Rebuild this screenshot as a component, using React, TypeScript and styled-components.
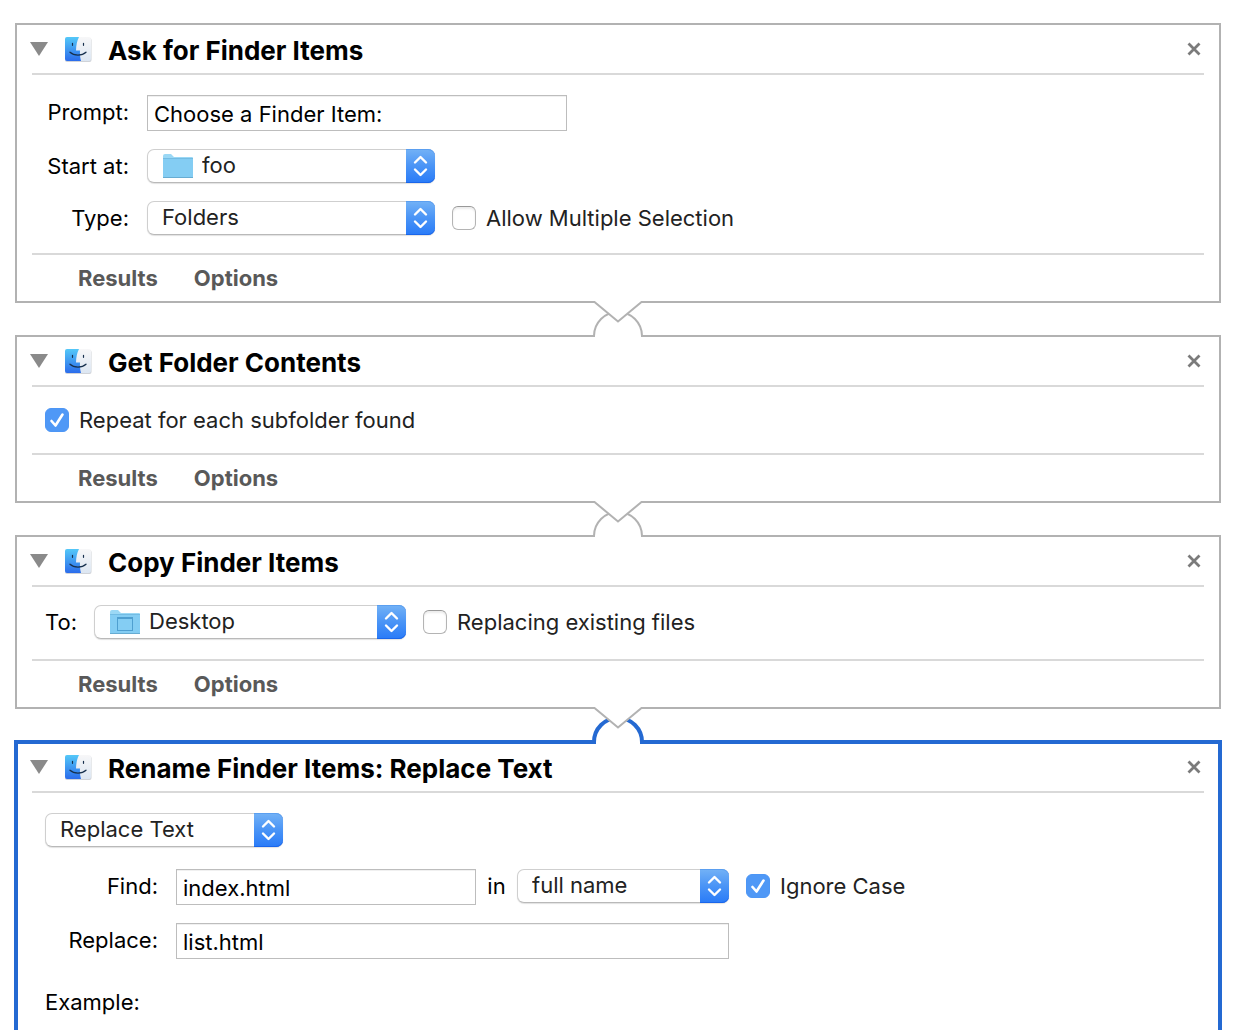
import React, { useId } from "react";
import styled, { createGlobalStyle, css } from "styled-components";

const GlobalStyle = createGlobalStyle`
  *, *::before, *::after { box-sizing: border-box; }
  body {
    margin: 0;
    background: #fff;
    color: #000;
    font-family: Inter, "Liberation Sans", sans-serif;
    font-size: 22px;
    line-height: 34px;
  }
  input, select, button { font: inherit; color: inherit; }
`;

const Workflow = styled.main`
  display: flex;
  flex-direction: column;
  height: 100vh;
  overflow: hidden;
  padding: 23px 15px 0;
`;

const Card = styled.section<{ $selected?: boolean }>`
  flex: none;
  border: 2px solid #b2b2b2;
  background: #fff;
  ${(p) =>
    p.$selected &&
    css`
      border-color: #2469d2;
      box-shadow: 0 0 0 1px #2469d2, inset 0 0 0 1px #2469d2;
    `}
`;

const Header = styled.header`
  display: flex;
  align-items: center;
  height: 50px;
  margin: 0 15px;
  border-bottom: 2px solid #d9d9d9;
`;

const IconButton = styled.button`
  display: flex;
  align-items: center;
  justify-content: center;
  padding: 0;
  border: 0;
  background: none;
  cursor: pointer;
`;

const Disclosure = styled(IconButton)`
  width: 18px;
  height: 18px;
  margin: 0 16px 0 -2px;
`;

const Title = styled.h2`
  flex: 1;
  margin: 0 0 0 16px;
  padding-top: 4px;
  font-size: 26px;
  font-weight: 700;
  line-height: 34px;
`;

const Close = styled(IconButton)`
  width: 20px;
  height: 20px;
`;

const Body = styled.div<{ $top: number; $bottom: number }>`
  display: flex;
  flex-direction: column;
  gap: 18px;
  padding: ${(p) => p.$top}px 28px ${(p) => p.$bottom}px;
`;

const Row = styled.div<{ $before?: number }>`
  display: flex;
  align-items: flex-start;
  gap: 17px;
  margin-top: ${(p) => p.$before ?? 0}px;
`;

const FieldLabel = styled.label<{ $width: number }>`
  flex: none;
  width: ${(p) => p.$width}px;
  padding-right: 1px;
  text-align: right;
  white-space: nowrap;
`;

const InlineGroup = styled.div`
  display: flex;
  align-items: flex-start;
`;

const Joiner = styled.label`
  width: 41px;
  text-align: center;
`;

const TextField = styled.input<{ $width: number }>`
  width: ${(p) => p.$width}px;
  height: 36px;
  padding: 1px 6px 0;
  border: 1px solid #bdbdbd;
  border-radius: 0;
  background: #fff;
  box-shadow: inset 0 1px 0 #f0f0f0;
  outline: none;
`;

const SelectBox = styled.div<{ $width: number }>`
  display: grid;
  flex: none;
  align-items: center;
  width: ${(p) => p.$width}px;
  height: 34px;
  & > * { grid-area: 1 / 1; }
  & > svg { margin-left: 15px; pointer-events: none; }
`;

const NativeSelect = styled.select<{ $icon: boolean }>`
  appearance: none;
  width: 100%;
  height: 34px;
  padding: 0 36px 2px ${(p) => (p.$icon ? 54 : 14)}px;
  border: 1px solid #cfcfcf;
  border-bottom-color: #b9b9b9;
  border-radius: 7px;
  background: #fff;
  color: #222;
  line-height: 30px;
  box-shadow: 0 1px 1px #e2e2e2;
  outline: none;
`;

const Cap = styled.span`
  display: flex;
  align-items: center;
  justify-content: center;
  justify-self: end;
  width: 29px;
  height: 34px;
  border-radius: 0 7px 7px 0;
  background: linear-gradient(#73b2f6, #4a94f6 50%, #297bf8);
  box-shadow: inset 0 -1px 0 #1a66ea, inset 0 1px 0 #5b9ff0;
  pointer-events: none;
`;

const CheckLabel = styled.label`
  display: flex;
  align-items: center;
  gap: 10px;
  height: 34px;
  color: #222;
  white-space: nowrap;
`;

const CheckBox = styled.span`
  display: grid;
  place-items: center;
  width: 24px;
  height: 24px;
  & > * { grid-area: 1 / 1; }
  svg { visibility: hidden; pointer-events: none; }
  input:checked + svg { visibility: visible; }
`;

const NativeCheck = styled.input`
  appearance: none;
  width: 24px;
  height: 24px;
  margin: 0;
  border: 1px solid #b4b4b4;
  border-top-color: #999;
  border-radius: 6px;
  background: #fff;
  box-shadow: inset 0 2px 2px #ededed;
  &:checked {
    border-color: #4d96f5;
    background: #4f98f6;
    box-shadow: none;
  }
`;

const Footer = styled.footer`
  display: flex;
  align-items: center;
  gap: 36px;
  height: 48px;
  margin: 0 15px;
  padding-left: 46px;
  border-top: 2px solid #d9d9d9;
`;

const FooterButton = styled.button`
  padding: 0;
  border: 0;
  background: none;
  color: #595959;
  font-weight: 700;
  cursor: pointer;
`;

const Joint = styled.svg`
  position: relative;
  z-index: 1;
  flex: none;
  align-self: center;
  width: 56px;
  height: 40px;
  margin: -2px 0 -6px;
`;

function Connector({ selected }: { selected?: boolean }) {
  return (
    <Joint viewBox="0 0 56 40" aria-hidden="true">
      <path d="M4 40V35A24 24 0 0 1 52 35V40Z" fill="#fff" />
      <path
        d="M0 35H4A24 24 0 0 1 52 35H56"
        fill="none"
        stroke={selected ? "#2469d2" : "#b2b2b2"}
        strokeWidth={selected ? 4 : 2}
      />
      <path d="M4 0V1L28 21L52 1V0Z" fill="#fff" />
      <path d="M0 1H4.5L28 20.500L51.5 1H56" fill="none" stroke="#b2b2b2" strokeWidth="2" />
    </Joint>
  );
}

function FinderIcon() {
  const id = useId();
  return (
    <svg width="28" height="28" viewBox="0 0 28 28" aria-hidden="true">
      <defs>
        <linearGradient id={id + "b"} x1="0" y1="0" x2="0" y2="1">
          <stop offset="0" stopColor="#54c8f8" />
          <stop offset="1" stopColor="#2b6ceb" />
        </linearGradient>
        <linearGradient id={id + "w"} x1="0" y1="0" x2="0" y2="1">
          <stop offset="0" stopColor="#f7f7f8" />
          <stop offset="1" stopColor="#dce6f2" />
        </linearGradient>
      </defs>
      <rect x="1" y="3" width="26.500" height="24" rx="2" fill="#d0d3d8" />
      <rect x="1" y="2" width="26" height="24" rx="2" fill={`url(#${id}w)`} />
      <path d="M3 2H15C13 6 12.200 10 12 15.500H16C15.800 19 16 22 17 26H3A2 2 0 0 1 1 24V4A2 2 0 0 1 3 2Z" fill={`url(#${id}b)`} />
      <path d="M8.500 8.300V10.300M19.500 8.300V10.300" stroke="#17304d" strokeWidth="1.200" strokeLinecap="round" />
      <path d="M6 17.300C10 21 18 21 22 17.300" fill="none" stroke="#17304d" strokeWidth="1.300" strokeLinecap="round" />
    </svg>
  );
}

function FolderIcon({ desktop }: { desktop?: boolean }) {
  return (
    <svg width="32" height="26" viewBox="0 0 32 26" aria-hidden="true">
      <path d="M1 3Q1 1 3 1H9L12 4H30Q31 4 31 5V24H1Z" fill="#9bd8f5" />
      <path d="M1 6H31V24Q31 25 30 25H2Q1 25 1 24Z" fill="#84cdf3" />
      <path d="M1 5.500H31" stroke="#73bce3" strokeWidth="1" />
      <path d="M1 24.500H31" stroke="#67acd2" strokeWidth="1" />
      {desktop && (
        <g fill="none" stroke="#4f9fd0">
          <rect x="8.500" y="8.500" width="15" height="13" fill="#84cdf3" />
          <path d="M8 9H24" strokeWidth="2" />
        </g>
      )}
    </svg>
  );
}

type PopUpProps = { id: string; width: number; value: string; icon?: React.ReactNode; label?: string };

function PopUp({ id, width, value, icon, label }: PopUpProps) {
  return (
    <SelectBox $width={width}>
      <NativeSelect id={id} $icon={!!icon} defaultValue={value} aria-label={label}>
        <option>{value}</option>
      </NativeSelect>
      {icon}
      <Cap>
        <svg width="15" height="22" viewBox="0 0 15 22" aria-hidden="true">
          <path d="M2 7.500L7.500 2L13 7.500M2 14.500L7.500 20L13 14.500" fill="none" stroke="#fff" strokeWidth="2.400" strokeLinecap="round" strokeLinejoin="round" />
        </svg>
      </Cap>
    </SelectBox>
  );
}

function Check({ text, checked }: { text: string; checked?: boolean }) {
  return (
    <CheckLabel>
      <CheckBox>
        <NativeCheck type="checkbox" defaultChecked={checked} />
        <svg width="24" height="24" viewBox="0 0 24 24" aria-hidden="true">
          <path d="M6.500 13L10.500 17.500L17.500 6.500" fill="none" stroke="#fff" strokeWidth="2.600" strokeLinecap="round" strokeLinejoin="round" />
        </svg>
      </CheckBox>
      {text}
    </CheckLabel>
  );
}

function CardHeader({ title }: { title: string }) {
  return (
    <Header>
      <Disclosure type="button" aria-label="Collapse">
        <svg width="18" height="14" viewBox="0 0 18 14" aria-hidden="true">
          <path d="M0 0H18L9 14Z" fill="#8a8a8a" />
        </svg>
      </Disclosure>
      <FinderIcon />
      <Title>{title}</Title>
      <Close type="button" aria-label="Remove">
        <svg width="14" height="14" viewBox="0 0 14 14" aria-hidden="true">
          <path d="M1.500 1.500L12.500 12.500M12.500 1.500L1.500 12.500" stroke="#7b7b7b" strokeWidth="2.800" />
        </svg>
      </Close>
    </Header>
  );
}

function CardFooter() {
  return (
    <Footer>
      <FooterButton type="button">Results</FooterButton>
      <FooterButton type="button">Options</FooterButton>
    </Footer>
  );
}

export default function App() {
  return (
    <>
      <GlobalStyle />
      <Workflow>
        <Card>
          <CardHeader title="Ask for Finder Items" />
          <Body $top={20} $bottom={18}>
            <Row>
              <FieldLabel $width={85} htmlFor="prompt">Prompt:</FieldLabel>
              <TextField $width={420} id="prompt" defaultValue="Choose a Finder Item:" />
            </Row>
            <Row>
              <FieldLabel $width={85} htmlFor="start">Start at:</FieldLabel>
              <PopUp id="start" width={288} value="foo" icon={<FolderIcon />} />
            </Row>
            <Row>
              <FieldLabel $width={85} htmlFor="type">Type:</FieldLabel>
              <PopUp id="type" width={288} value="Folders" />
              <Check text="Allow Multiple Selection" />
            </Row>
          </Body>
          <CardFooter />
        </Card>
        <Connector />
        <Card>
          <CardHeader title="Get Folder Contents" />
          <Body $top={16} $bottom={16}>
            <Check text="Repeat for each subfolder found" checked />
          </Body>
          <CardFooter />
        </Card>
        <Connector />
        <Card>
          <CardHeader title="Copy Finder Items" />
          <Body $top={18} $bottom={20}>
            <Row>
              <FieldLabel $width={32} htmlFor="to">To:</FieldLabel>
              <PopUp id="to" width={312} value="Desktop" icon={<FolderIcon desktop />} />
              <Check text="Replacing existing files" />
            </Row>
          </Body>
          <CardFooter />
        </Card>
        <Connector selected />
        <Card $selected>
          <CardHeader title="Rename Finder Items: Replace Text" />
          <Body $top={20} $bottom={40}>
            <PopUp id="mode" width={238} value="Replace Text" label="Rename mode" />
            <Row $before={4}>
              <FieldLabel $width={114} htmlFor="find">Find:</FieldLabel>
              <InlineGroup>
                <TextField $width={300} id="find" defaultValue="index.html" />
                <Joiner htmlFor="scope">in</Joiner>
                <PopUp id="scope" width={212} value="full name" />
              </InlineGroup>
              <Check text="Ignore Case" checked />
            </Row>
            <Row>
              <FieldLabel $width={114} htmlFor="replace">Replace:</FieldLabel>
              <TextField $width={553} id="replace" defaultValue="list.html" />
            </Row>
            <Row $before={8}>Example:</Row>
          </Body>
        </Card>
      </Workflow>
    </>
  );
}
